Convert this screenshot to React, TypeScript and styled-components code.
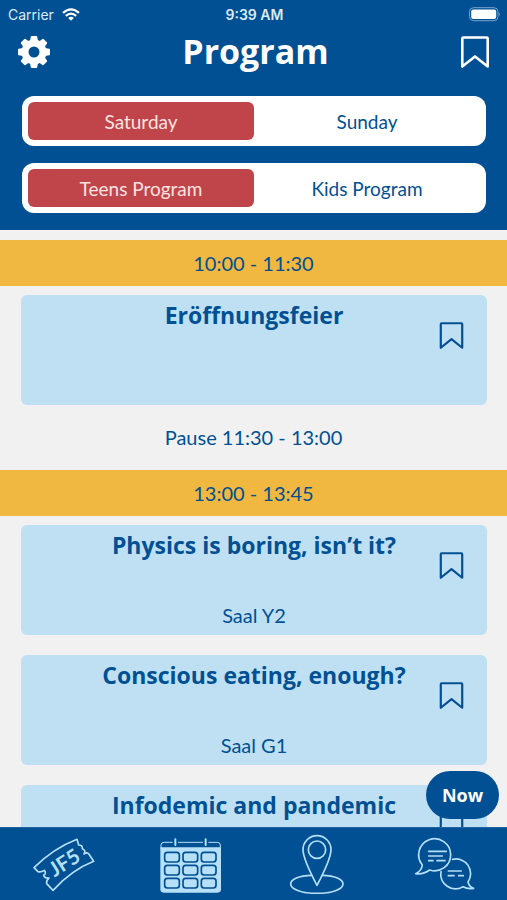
import React, { useState } from "react";
import styled, { createGlobalStyle } from "styled-components";

const blue = "#005093";
const pale = "#bfe0f3";
const sky = "#b5e0f8";

const GlobalStyle = createGlobalStyle`
  *, *::before, *::after { box-sizing: border-box; }
  body { margin: 0; background: #f1f1f1; font-family: Lato, sans-serif; color: ${blue}; }
  button, input { font: inherit; color: inherit; }
  h1, h2, h3, p { margin: 0; }
`;

const Screen = styled.div`
  height: 100vh;
  display: flex;
  flex-direction: column;
`;

const Header = styled.header`
  background: ${blue};
  color: #fff;
  padding-bottom: 17px;
`;

const StatusBar = styled.div`
  display: grid;
  grid-template-columns: 1fr auto 1fr;
  align-items: center;
  height: 28px;
  padding: 0 6px 0 8px;
  font-family: Inter, sans-serif;
  font-size: 14px;
  color: #dceaf5;
`;

const Carrier = styled.span`
  display: flex;
  align-items: center;
  gap: 8px;
`;

const Clock = styled.time`
  font-weight: 600;
`;

const BatterySlot = styled.span`
  display: flex;
  justify-content: flex-end;
`;

const TitleRow = styled.div`
  display: flex;
  align-items: center;
  justify-content: space-between;
  height: 48px;
  padding: 0 16px;
`;

const Title = styled.h1`
  padding-bottom: 2px;
  font-family: "Open Sans", sans-serif;
  font-size: 34px;
  line-height: 44px;
  font-weight: 700;
`;

const IconButton = styled.button`
  display: flex;
  align-items: center;
  justify-content: center;
  padding: 0;
  border: 0;
  background: none;
  cursor: pointer;
`;

const Segments = styled.div`
  display: flex;
  flex-direction: column;
  gap: 17px;
  padding: 20px 21px 0 22px;
`;

const Segment = styled.fieldset`
  display: grid;
  grid-template-columns: 1fr 1fr;
  margin: 0;
  padding: 6px;
  border: 0;
  border-radius: 12px;
  background: #fff;
`;

const Option = styled.label<{ $active: boolean }>`
  display: flex;
  align-items: center;
  justify-content: center;
  height: 38px;
  border-radius: 6px;
  font-size: 19px;
  cursor: pointer;
  background: ${(p) => (p.$active ? "#c0454b" : "transparent")};
  color: ${(p) => (p.$active ? "#fbe3e0" : blue)};
`;

const HiddenRadio = styled.input`
  appearance: none;
  width: 0;
  height: 0;
  margin: 0;
`;

const Body = styled.div`
  position: relative;
  flex: 1;
  min-height: 0;
`;

const Schedule = styled.main`
  height: 100%;
  overflow-y: auto;
  scrollbar-width: none;
  padding: 10px 0;
`;

const TimeBand = styled.h2`
  background: #f0b840;
  text-align: center;
  font-size: 20px;
  line-height: 46px;
  font-weight: 400;
`;

const Cards = styled.div`
  display: flex;
  flex-direction: column;
  gap: 20px;
  padding: 9px 20px 0 21px;
`;

const Card = styled.article`
  display: grid;
  grid-template-columns: 72px 1fr 72px;
  min-height: 110px;
  border-radius: 6px;
  background: ${pale};
`;

const CardText = styled.div`
  grid-column: 2;
  display: flex;
  flex-direction: column;
  justify-content: space-between;
  padding: 6px 0 7px;
  text-align: center;
  white-space: nowrap;
`;

const CardTitle = styled.h3`
  font-family: "Open Sans", sans-serif;
  font-size: 23px;
  line-height: 28px;
  font-weight: 700;
`;

const Room = styled.p`
  font-size: 20px;
  line-height: 26px;
`;

const CardBookmark = styled(IconButton)`
  height: 80px;
`;

const Break = styled.p`
  text-align: center;
  font-size: 20px;
  line-height: 65px;
`;

const NowButton = styled.button`
  position: absolute;
  right: 8px;
  bottom: 8px;
  width: 73px;
  height: 48px;
  padding: 0;
  border: 0;
  border-radius: 24px;
  background: ${blue};
  color: #fff;
  font-family: "Open Sans", sans-serif;
  font-size: 18px;
  font-weight: 700;
  cursor: pointer;
`;

const TabBar = styled.nav`
  display: grid;
  grid-template-columns: repeat(4, 1fr);
  height: 73px;
  border-top: 1px solid #1d639f;
  background: ${blue};
`;

const Tab = styled.a`
  display: flex;
  align-items: center;
  justify-content: center;
`;

const TabSvg = styled.svg`
  width: 64px;
  height: 60px;
  fill: none;
  stroke: ${sky};
  stroke-width: 5;
  stroke-linecap: round;
  stroke-linejoin: round;
`;

const GearIcon = () => (
  <svg width="36" height="36" viewBox="-18 -18 36 36" aria-hidden="true">
    <circle r="9" fill="none" stroke="#fff" strokeWidth="7" />
    {[0, 45, 90, 135, 180, 225, 270, 315].map((a) => (
      <path key={a} d="M-4 -11L-3.2 -15.2Q-3 -16 -2.2 -16H2.2Q3 -16 3.2 -15.2L4 -11Z" fill="#fff" transform={`rotate(${a})`} />
    ))}
  </svg>
);

const BookmarkIcon = ({ size }: { size: number }) => (
  <svg width={size} height={size} viewBox="0 0 32 32" fill="none" stroke="currentColor" strokeWidth="2.6" strokeLinejoin="round" aria-hidden="true">
    <path d="M4.2 1.5H27.8Q28.7 1.5 28.7 2.6V30.5L16 20.4L3.3 30.5V2.6Q3.3 1.5 4.2 1.5Z" />
  </svg>
);

const WifiIcon = () => (
  <svg width="18" height="13" viewBox="0 0 18 13" fill="none" stroke="#fff" strokeWidth="2.2" aria-hidden="true">
    <path d="M1 4.9Q9 -2.1 17 4.9" />
    <path d="M3.8 7.8Q9 3.3 14.2 7.8" />
    <path d="M9 12.7L6.2 9.9Q9 7.8 11.8 9.9Z" fill="#fff" stroke="none" />
  </svg>
);

const BatteryIcon = () => (
  <svg width="32" height="15" viewBox="0 0 32 15" aria-hidden="true">
    <rect x="0.5" y="0.7" width="28.5" height="13" rx="4" fill="none" stroke="#78a5cb" />
    <rect x="2.2" y="2.5" width="25" height="9.5" rx="2" fill="#fff" />
    <path d="M30.2 5Q32 7.2 30.2 9.4Z" fill="#78a5cb" />
  </svg>
);

const TicketIcon = () => (
  <TabSvg viewBox="94 24 192 180" aria-hidden="true">
    <path d="M103 125Q162 67 232 40L237 57Q249 57 248 68Q260 73 253 84Q262 77 268 85L282 106Q216 132 160 193L141 173Q139 163 148 156Q136 158 132 148Q141 143 134 133Q125 139 115 137Z" />
    <text x="194" y="132" transform="rotate(-32 194 110)" textAnchor="middle" fontFamily="Lato, sans-serif" fontSize="62" fontWeight="700" fill={sky} stroke="none">JF5</text>
  </TabSvg>
);

const CalendarIcon = () => (
  <TabSvg viewBox="94 24 192 180" aria-hidden="true">
    <path d="M103 68V57Q103 49 112 49H272Q281 49 281 57V68" strokeWidth="3" />
    <path d="M101 64H283V190Q283 200 273 200H111Q101 200 101 190Z" fill={sky} stroke="none" />
    <path d="M146 40V58M237 40V58" stroke={blue} strokeWidth="16" strokeLinecap="butt" />
    <path d="M146 40V57M237 40V57" strokeWidth="6" />
    {[79, 118, 157].map((y) =>
      [114, 169, 224].map((x) => (
        <rect key={`${x}-${y}`} x={x} y={y} width="44" height="29" rx="8" stroke={blue} />
      ))
    )}
  </TabSvg>
);

const PinIcon = () => (
  <TabSvg viewBox="94 24 192 180" aria-hidden="true">
    <path d="M190 178Q148 98 148 71A42 42 0 0 1 232 71Q232 98 190 178Z" />
    <circle cx="190" cy="71" r="26" />
    <path d="M174 148C135 149 111 160 111 174C111 190 146 202 190 202C234 202 268 190 268 174C268 160 245 149 206 148" />
  </TabSvg>
);

const ChatIcon = () => (
  <TabSvg viewBox="94 24 192 180" aria-hidden="true">
    <path d="M125 117A48 48 0 1 1 147 132C136 140 121 145 105 143C117 137 124 129 125 117Z" />
    <path d="M216 100A44 44 0 0 1 262 168Q266 183 279 187Q261 190 247 182A44 44 0 0 1 181 137" />
    <path d="M144 76H197M144 90H185M144 104H157M169 104H193M203 135H242M203 149H220M234 149H248" />
  </TabSvg>
);

interface SegmentedProps {
  name: string;
  options: string[];
}

const Segmented = ({ name, options }: SegmentedProps) => {
  const [value, setValue] = useState(options[0]);
  return (
    <Segment aria-label={name}>
      {options.map((o) => (
        <Option key={o} $active={o === value}>
          <HiddenRadio type="radio" name={name} checked={o === value} onChange={() => setValue(o)} />
          {o}
        </Option>
      ))}
    </Segment>
  );
};

const Event = ({ title, room }: { title: string; room?: string }) => (
  <Card>
    <CardText>
      <CardTitle>{title}</CardTitle>
      {room && <Room>{room}</Room>}
    </CardText>
    <CardBookmark type="button" aria-label={`Bookmark ${title}`}>
      <BookmarkIcon size={27} />
    </CardBookmark>
  </Card>
);

export default function App() {
  return (
    <Screen>
      <GlobalStyle />
      <Header>
        <StatusBar>
          <Carrier>Carrier <WifiIcon /></Carrier>
          <Clock>9:39 AM</Clock>
          <BatterySlot><BatteryIcon /></BatterySlot>
        </StatusBar>
        <TitleRow>
          <IconButton type="button" aria-label="Settings"><GearIcon /></IconButton>
          <Title>Program</Title>
          <IconButton type="button" aria-label="Bookmarks"><BookmarkIcon size={32} /></IconButton>
        </TitleRow>
        <Segments>
          <Segmented name="Day" options={["Saturday", "Sunday"]} />
          <Segmented name="Audience" options={["Teens Program", "Kids Program"]} />
        </Segments>
      </Header>
      <Body>
        <Schedule>
          <TimeBand>10:00 - 11:30</TimeBand>
          <Cards>
            <Event title="Eröffnungsfeier" />
          </Cards>
          <Break>Pause 11:30 - 13:00</Break>
          <TimeBand>13:00 - 13:45</TimeBand>
          <Cards>
            <Event title="Physics is boring, isn’t it?" room="Saal Y2" />
            <Event title="Conscious eating, enough?" room="Saal G1" />
            <Event title="Infodemic and pandemic" />
          </Cards>
        </Schedule>
        <NowButton type="button">Now</NowButton>
      </Body>
      <TabBar aria-label="Main">
        <Tab href="#ticket" aria-label="Ticket"><TicketIcon /></Tab>
        <Tab href="#program" aria-label="Program"><CalendarIcon /></Tab>
        <Tab href="#map" aria-label="Map"><PinIcon /></Tab>
        <Tab href="#chat" aria-label="Chat"><ChatIcon /></Tab>
      </TabBar>
    </Screen>
  );
}
